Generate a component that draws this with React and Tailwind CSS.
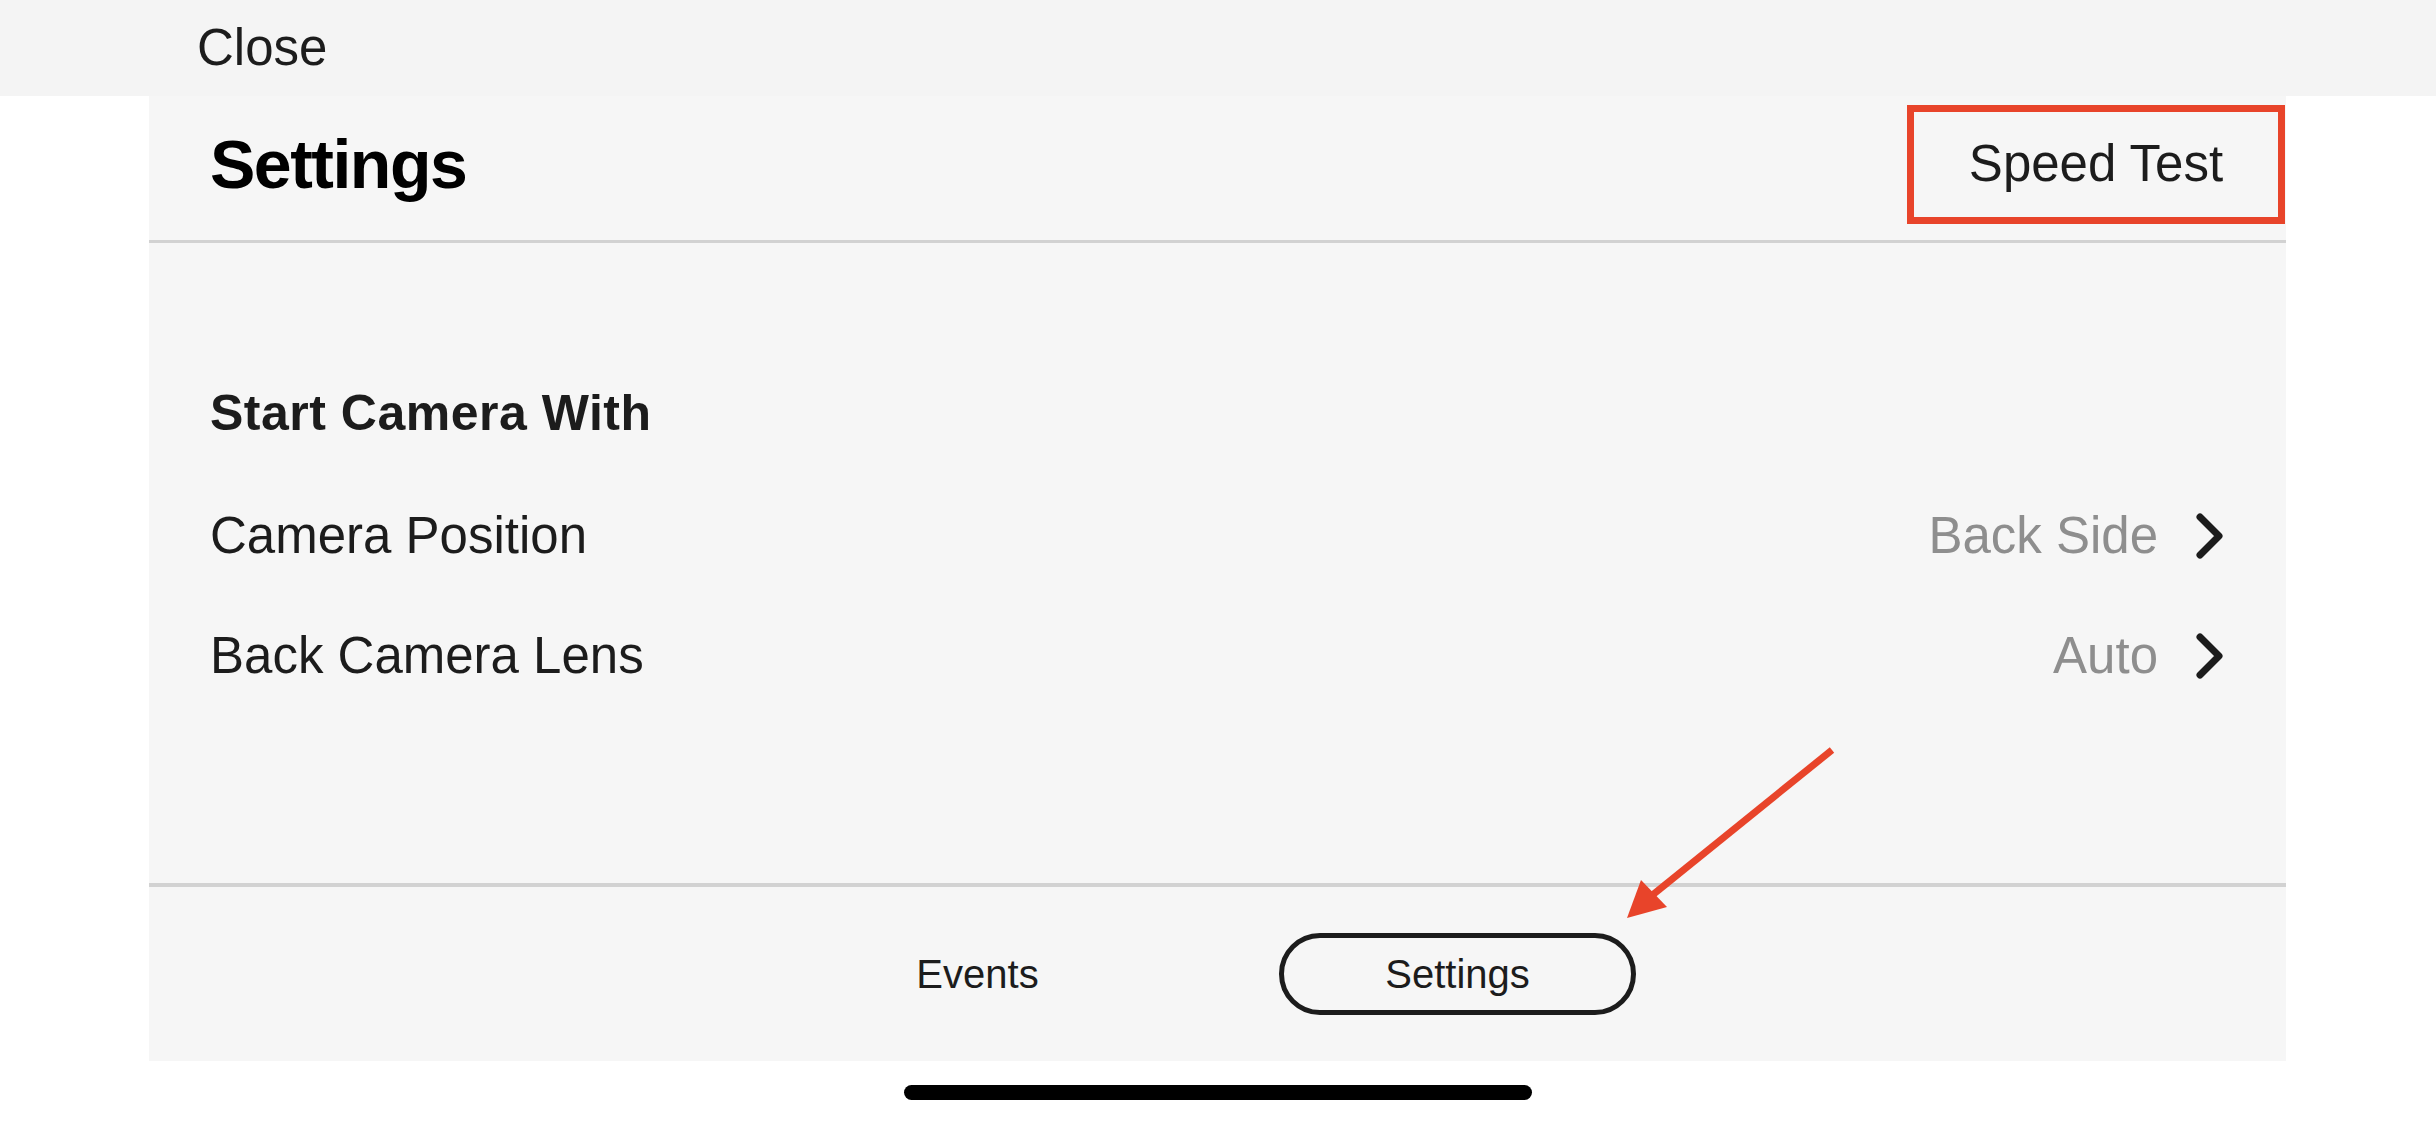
import React from "react";

function Chevron() {
  return (
    <svg width="30" height="46" viewBox="0 0 30 46" className="shrink-0">
      <polyline points="5,4 24,23 5,42" fill="none" stroke="#1c1c1c" strokeWidth="7" strokeLinecap="round" strokeLinejoin="round" />
    </svg>
  );
}

function Row({ label, value }) {
  return (
    <div className="h-[120px] flex items-center justify-between">
      <span className="text-[51px] text-[#1c1c1c]">{label}</span>
      <div className="flex items-center gap-[37px]">
        <span className="text-[51px] text-[#8e8e8e]">{value}</span>
        <Chevron />
      </div>
    </div>
  );
}

export default function App() {
  return (
    <div
      className="relative w-[2436px] h-[1125px] bg-white flex flex-col overflow-hidden"
      style={{ fontFamily: '"Liberation Sans", Arial, sans-serif' }}
    >
      <div className="h-[96px] bg-[#f4f4f4] flex items-center pl-[197px] shrink-0">
        <span className="text-[51px] text-[#1c1c1c]">Close</span>
      </div>

      <div className="mx-[149px] w-[2137px] h-[965px] bg-[#f6f6f6] flex flex-col shrink-0">
        <div className="h-[144px] flex items-center justify-between pl-[61px] pb-[8px] shrink-0">
          <span className="text-[68px] font-bold text-black tracking-[-1.5px]">Settings</span>
          <div className="w-[378px] h-[119px] border-[7px] border-[#e8442a] flex items-center justify-center mr-[1px] mt-[1px]">
            <span className="text-[51px] text-[#1c1c1c]">Speed Test</span>
          </div>
        </div>
        <div className="h-[3px] bg-[#d2d2d2] shrink-0" />

        <div className="flex-1 flex flex-col px-[61px] pt-[140px]">
          <div className="h-[60px] flex items-center mb-[33px]">
            <span className="text-[50px] font-bold text-[#1c1c1c] tracking-[0.5px]">Start Camera With</span>
          </div>
          <Row label="Camera Position" value="Back Side" />
          <Row label="Back Camera Lens" value="Auto" />
        </div>

        <div className="h-[4px] bg-[#d2d2d2] shrink-0" />
        <div className="h-[174px] flex items-center justify-center gap-[123px] shrink-0">
          <div className="w-[357px] h-[82px] flex items-center justify-center">
            <span className="text-[40px] text-[#1c1c1c]">Events</span>
          </div>
          <div className="w-[357px] h-[82px] rounded-full border-[5px] border-[#1c1c1c] flex items-center justify-center">
            <span className="text-[40px] text-[#1c1c1c]">Settings</span>
          </div>
        </div>
      </div>

      <div className="mt-[24px] mx-auto w-[628px] h-[15px] rounded-full bg-black shrink-0" />

      <svg className="absolute left-0 top-0 pointer-events-none" width="2436" height="1125">
        <line x1="1832" y1="750" x2="1650" y2="897" stroke="#e8442a" strokeWidth="7" />
        <polygon points="1627,918 1641,880 1667,907" fill="#e8442a" />
      </svg>
    </div>
  );
}
